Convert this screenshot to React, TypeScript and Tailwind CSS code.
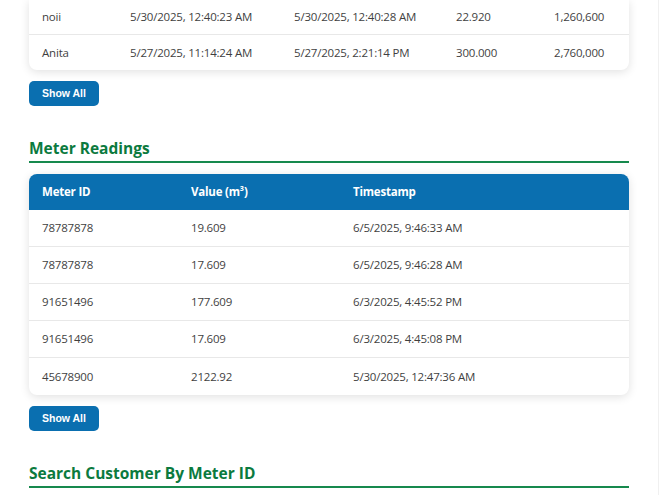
const font = { fontFamily: '"Open Sans", "Noto Sans", sans-serif' };

const consumption = [
  ['noii', '5/30/2025, 12:40:23 AM', '5/30/2025, 12:40:28 AM', '22.920', '1,260,600'],
  ['Anita', '5/27/2025, 11:14:24 AM', '5/27/2025, 2:21:14 PM', '300.000', '2,760,000'],
];

const readings = [
  ['78787878', '19.609', '6/5/2025, 9:46:33 AM'],
  ['78787878', '17.609', '6/5/2025, 9:46:28 AM'],
  ['91651496', '177.609', '6/3/2025, 4:45:52 PM'],
  ['91651496', '17.609', '6/3/2025, 4:45:08 PM'],
  ['45678900', '2122.92', '5/30/2025, 12:47:36 AM'],
];

function ShowAll() {
  return (
    <button
      className="mt-[11px] h-[25px] w-[70px] rounded-[5px] bg-[#0a6fb0] text-[10.5px] font-bold text-white"
      style={{ fontFamily: '"Liberation Sans", Arial, sans-serif' }}
    >
      Show All
    </button>
  );
}

function Heading({ children }: { children: React.ReactNode }) {
  return (
    <h2 className="mt-[30px] border-b-2 border-[#16894d] pb-[1px] text-[15.5px] font-bold leading-[24px] text-[#0b7a3e]">
      {children}
    </h2>
  );
}

export default function App() {
  return (
    <div className="min-h-[495px] overflow-hidden bg-white border-r border-[#f0f0f0]" style={font}>
      <div className="ml-[29px] w-[600px]">
        {/* previous table, scrolled so only its last rows show */}
        <div className="rounded-b-lg bg-white shadow-[0_2px_10px_rgba(0,0,0,0.12)]">
          {consumption.map((r, i) => (
            <div
              key={i}
              className={`flex h-[35px] items-center text-[11.5px] tracking-[-0.2px] text-[#3f3f3f] ${i === 0 ? 'border-b border-[#e8e8e8]' : ''}`}
            >
              <span className="w-[101px] pl-[13px]">{r[0]}</span>
              <span className="w-[164px]">{r[1]}</span>
              <span className="w-[162px]">{r[2]}</span>
              <span className="w-[98px]">{r[3]}</span>
              <span>{r[4]}</span>
            </div>
          ))}
        </div>
        <ShowAll />

        <Heading>Meter Readings</Heading>
        <div className="mt-[11px] overflow-hidden rounded-lg bg-white shadow-[0_2px_10px_rgba(0,0,0,0.12)]">
          <div className="flex h-[36px] items-center bg-[#0a6fb0] text-[11.5px] font-bold tracking-[-0.2px] text-white">
            <span className="w-[162px] pl-[13px]">Meter ID</span>
            <span className="w-[162px]">Value (m³)</span>
            <span>Timestamp</span>
          </div>
          {readings.map((r, i) => (
            <div
              key={i}
              className={`flex h-[37px] items-center text-[11.5px] tracking-[-0.2px] text-[#3f3f3f] ${i < readings.length - 1 ? 'border-b border-[#e8e8e8]' : ''}`}
            >
              <span className="w-[162px] pl-[13px]">{r[0]}</span>
              <span className="w-[162px]">{r[1]}</span>
              <span>{r[2]}</span>
            </div>
          ))}
        </div>
        <ShowAll />

        <Heading>Search Customer By Meter ID</Heading>
      </div>
    </div>
  );
}
